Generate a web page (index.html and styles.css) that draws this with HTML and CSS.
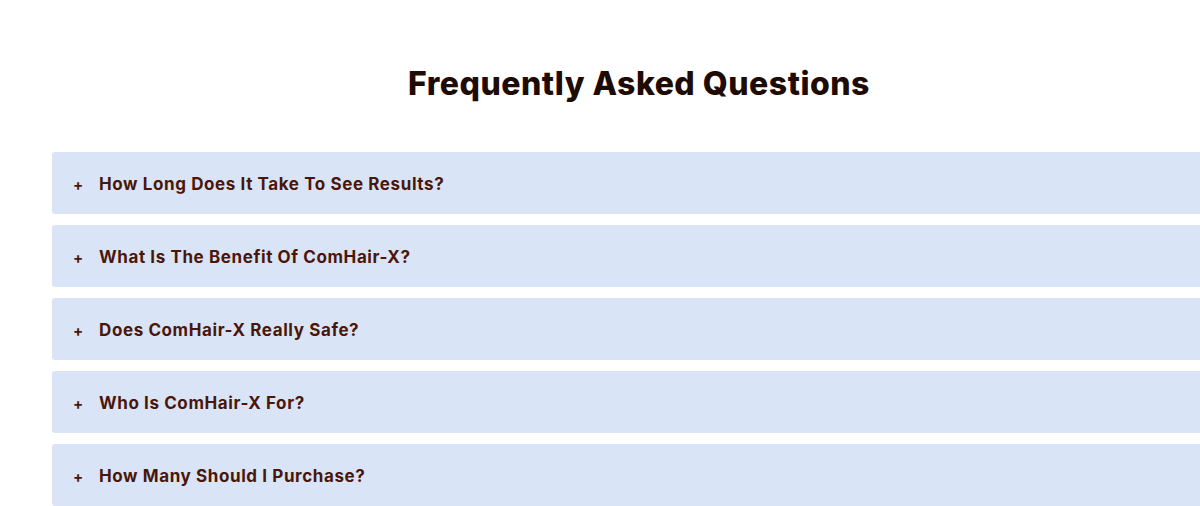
FILE: index.html
```html
<!DOCTYPE html>
<html lang="en">
<head>
<meta charset="utf-8">
<title>FAQ</title>
<link rel="stylesheet" href="styles.css">
</head>
<body>
<section class="faq">
  <h2 class="faq-title">Frequently Asked Questions</h2>
  <div class="faq-list">
    <div class="faq-item"><span class="faq-icon">+</span><span class="faq-q">How Long Does It Take To See Results?</span></div>
    <div class="faq-item"><span class="faq-icon">+</span><span class="faq-q">What Is The Benefit Of ComHair-X?</span></div>
    <div class="faq-item"><span class="faq-icon">+</span><span class="faq-q">Does ComHair-X Really Safe?</span></div>
    <div class="faq-item"><span class="faq-icon">+</span><span class="faq-q">Who Is ComHair-X For?</span></div>
    <div class="faq-item"><span class="faq-icon">+</span><span class="faq-q">How Many Should I Purchase?</span></div>
  </div>
</section>
</body>
</html>
```
FILE: styles.css
```css
html, body {
  margin: 0;
  padding: 0;
  background: #ffffff;
  overflow: hidden;
}
body {
  font-family: "Inter", "Open Sans", sans-serif;
}
.faq {
  width: 1174px;
  margin-left: 52px;
  padding-top: 64px;
}
.faq-title {
  margin: 0 0 48px;
  text-align: center;
  font-size: 32px;
  line-height: 40px;
  font-weight: 800;
  letter-spacing: 0.5px;
  color: #1e0b03;
}
.faq-list {
  display: flex;
  flex-direction: column;
  gap: 11px;
}
.faq-item {
  box-sizing: border-box;
  height: 62px;
  background: #dae4f7;
  border-radius: 3px;
  display: flex;
  align-items: center;
  padding-left: 21px;
  padding-top: 2px;
  color: #4a1608;
  font-weight: 700;
  font-size: 17px;
}
.faq-icon {
  width: 26px;
  font-size: 15px;
}
.faq-q {
  letter-spacing: 0.6px;
}
```
